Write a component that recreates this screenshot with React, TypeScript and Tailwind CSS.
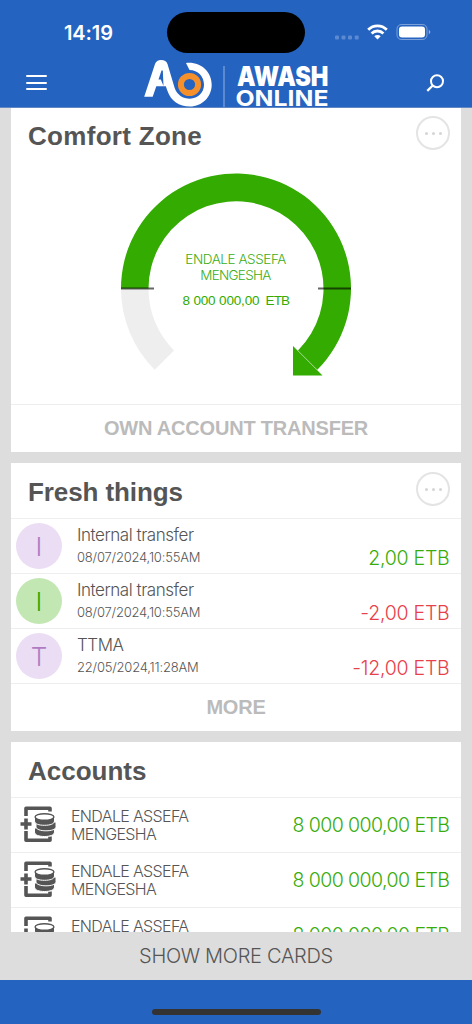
import { ReactNode } from "react";

const transfers = [
    { id: 1, letter: "I", title: "Internal transfer", date: "08/07/2024,10:55AM", amount: "2,00 ETB", avatar: "bg-[#ebddf3] text-[#af7cc4]", color: "text-[#37ac0b]" },
    { id: 2, letter: "I", title: "Internal transfer", date: "08/07/2024,10:55AM", amount: "-2,00 ETB", avatar: "bg-[#c3e7b3] text-[#33a800]", color: "text-[#e8404a]" },
    { id: 3, letter: "T", title: "TTMA", date: "22/05/2024,11:28AM", amount: "-12,00 ETB", avatar: "bg-[#ebddf3] text-[#af7cc4]", color: "text-[#e8404a]" },
];

const accounts = [1, 2, 3];

function StatusBar() {
    return (
        <div className="flex h-[60px] items-start justify-between pl-16 pr-[41px] pt-3">
            <span className="w-[50px] pt-[9px] font-[Inter] text-[20px] leading-6 font-semibold tracking-[-0.1px]">14:19</span>
            <div className="ml-[23px] h-[41px] w-[138px] rounded-full bg-black" />
            <div className="flex pt-[11px]">
                <svg width="97" height="20" viewBox="334 23 97 20">
                    <g fill="#fff" fillOpacity=".25">
                        <rect x="335" y="35.500" width="4" height="4" rx="1" />
                        <rect x="341.5" y="35.500" width="4" height="4" rx="1" />
                        <rect x="348" y="35.500" width="4" height="4" rx="1" />
                        <rect x="354.700" y="35.500" width="4" height="4" rx="1" />
                    </g>
                    <g fill="none" stroke="#fff" strokeWidth="2.800">
                        <path d="M368.200 29.700a13.200 13.200 0 0 1 18.600 0" />
                        <path d="M371.600 33.400a8.400 8.400 0 0 1 11.800 0" />
                    </g>
                    <path d="M377.500 39.500l-3.200-3.200a4.500 4.500 0 0 1 6.400 0z" fill="#fff" />
                    <rect x="397" y="24.500" width="30" height="15" rx="4.500" fill="none" stroke="#fff" strokeOpacity=".4" />
                    <rect x="399" y="26.500" width="26" height="11" rx="3" fill="#fff" />
                    <path d="M428.800 29.800q3 2.200 0 4.500z" fill="#fff" fillOpacity=".5" />
                </svg>
            </div>
        </div>
    );
}

function Logo() {
    return (
        <svg width="190" height="48" viewBox="142 59 190 48">
            <path d="M144.200 96.800L155 64Q156.500 60 161 60Q166.200 60 167.500 64L174.500 87.500C177 95 183 98.700 190 98.700C198 98.700 204 92.500 204 84.800C204 76.500 198 70 189.500 70L186 63C201 61.500 211.700 72 211.700 84.800C211.700 97 202 106.600 190 106.600C179 106.600 171 101 167.500 91L165.800 86.300H156.300L152.700 96.800zM158.500 79.500H160.800L163.500 86L162.800 70.500H161.500z" fill="#fff" fillRule="evenodd" />
            <circle cx="189.500" cy="84.500" r="8.600" fill="none" stroke="#f6902b" strokeWidth="6" />
            <path d="M224 66v41" stroke="#fff" strokeOpacity=".5" />
            <g fill="#fff" fontFamily="Inter, sans-serif">
                <text x="237" y="85.800" fontSize="26.500" fontWeight="900" textLength="91.500" lengthAdjust="spacingAndGlyphs">AWASH</text>
                <text x="235.500" y="105.500" fontSize="22" fontWeight="700" textLength="93" lengthAdjust="spacingAndGlyphs">ONLINE</text>
            </g>
        </svg>
    );
}

function Header() {
    return (
        <header className="h-[108px] shrink-0 border-b border-[#6288c4] bg-[#2563c0] text-white">
            <StatusBar />
            <div className="flex h-[47px] items-center justify-between pb-[2px] pl-[26px] pr-7">
                <button className="flex w-[21px] flex-col gap-[4.500px]">
                    <span className="h-[2px] rounded-full bg-white" />
                    <span className="h-[2px] rounded-full bg-white" />
                    <span className="h-[2px] rounded-full bg-white" />
                </button>
                <div className="ml-px">
                    <Logo />
                </div>
                <svg width="18" height="18" viewBox="0 0 18 18" fill="none" stroke="#fff" strokeWidth="2">
                    <circle cx="11" cy="7.200" r="6" />
                    <path d="M6.700 11.500L1.300 16.900" strokeWidth="2.200" />
                </svg>
            </div>
        </header>
    );
}

function Card({ title, children, menu = true, titleClass = "" }: { title: string; children: ReactNode; menu?: boolean; titleClass?: string }) {
    return (
        <section className="shrink-0 bg-white">
            <div className="flex h-[55px] items-center justify-between pl-[17px] pr-[11px]">
                <h2 className={`pt-[2px] text-[26px] leading-8 font-bold text-[#555] ${titleClass}`}>{title}</h2>
                {menu && (
                    <button className="mb-[3px] flex size-[34px] items-center justify-center gap-1 rounded-full border-2 border-[#e4e4e4]">
                        <span className="size-[3px] rounded-full bg-[#d5d5d5]" />
                        <span className="size-[3px] rounded-full bg-[#d5d5d5]" />
                        <span className="size-[3px] rounded-full bg-[#d5d5d5]" />
                    </button>
                )}
            </div>
            {children}
        </section>
    );
}

function Gauge() {
    return (
        <svg className="block" width="450" height="242" viewBox="11 162 450 242">
            <path d="M121 288.500A115 115 0 0 0 154.700 369.800L174 350.500A87.500 87.500 0 0 1 148.500 288.500z" fill="#eee" />
            <path d="M121 288.500A115 115 0 1 1 317.300 369.800L298 350.500A87.500 87.500 0 1 0 148.500 288.500z" fill="#33ab00" />
            <path d="M293 346V375.500H322.500z" fill="#33ab00" />
            <path d="M121 288.500h33M318 288.500h33" stroke="#000" strokeOpacity=".6" strokeWidth="2" />
            <g fill="#3bae14" fontFamily="Inter, sans-serif" fontWeight="300" fontSize="13.500" textAnchor="middle">
                <text x="235.800" y="264.300" textLength="101">ENDALE ASSEFA</text>
                <text x="235.800" y="279.500" textLength="71">MENGESHA</text>
            </g>
            <text x="182.500" y="305" fill="#33ab00" fontFamily="Liberation Sans, sans-serif" fontSize="13.500" textLength="77">8 000 000,00</text>
            <text x="265.500" y="305" fill="#33ab00" fontFamily="Liberation Sans, sans-serif" fontSize="13.500" textLength="24.500">ETB</text>
        </svg>
    );
}

function AccountIcon() {
    return (
        <svg className="mb-[2px]" width="38" height="38" viewBox="0 0 38 38" fill="none" stroke="#555" strokeWidth="3.600">
            <path d="M6 11V3.300H30V6.500M6 26V35.200H30V31.500" strokeLinejoin="round" />
            <path d="M0.500 19H11.500M6 13.500V24.500" />
            <g fill="#555" stroke="#fff" strokeWidth="1">
                <path d="M14.500 23v4c0 3 4.500 4.500 10 4.500s10-1.500 10-4.500v-4z" />
                <path d="M16 17v4.500c0 3 4.500 4.300 10 4.300s10-1.300 10-4.300V17z" />
                <path d="M14.500 12v4c0 3 4.500 4.300 10 4.300s10-1.300 10-4.300v-4z" />
            </g>
            <ellipse cx="24.500" cy="12" rx="9.400" ry="3.300" fill="#fff" strokeWidth="1.400" />
        </svg>
    );
}

export default function App() {
    return (
        <div className="flex h-screen w-full flex-col overflow-hidden bg-[#ddd] font-['Liberation_Sans',sans-serif]">
            <Header />
            <main className="flex min-h-0 flex-1 flex-col gap-[11px] overflow-hidden px-[11px]">
                <div className="-mt-px">
                    <Card title="Comfort Zone" titleClass="tracking-[0.3px]">
                        <Gauge />
                        <button className="block h-12 w-full border-t border-[#eee] pb-[2px] text-[20px] font-bold tracking-[-0.2px] text-[#bbb]">OWN ACCOUNT TRANSFER</button>
                    </Card>
                </div>
                <Card title="Fresh things" titleClass="tracking-[-0.1px]">
                    {transfers.map((t) => (
                        <div key={t.id} className="flex h-[55px] border-t border-[#eee] pl-[5px] pr-[11.500px] font-[Inter] font-light text-[#555]">
                            <div className={`mt-1 flex size-[46px] items-center justify-center rounded-full text-[26px] ${t.avatar}`}>{t.letter}</div>
                            <div className="ml-[15px] flex-1 pt-1">
                                <p className="text-[17px] leading-6 tracking-[-0.45px]">{t.title}</p>
                                <p className="text-[13px] leading-5 tracking-[-0.2px]">{t.date}</p>
                            </div>
                            <p className={`pt-[25px] text-[19.500px] leading-7 tracking-[-0.25px] ${t.color}`}>{t.amount}</p>
                        </div>
                    ))}
                    <button className="block h-12 w-full border-t border-[#eee] pb-[2px] text-[20px] font-bold tracking-[-0.2px] text-[#bbb]">MORE</button>
                </Card>
                <Card title="Accounts" menu={false}>
                    {accounts.map((id) => (
                        <div key={id} className="flex h-[55px] items-center border-t border-[#eee] pl-[9px] pr-[11.500px] font-[Inter] font-light">
                            <AccountIcon />
                            <p className="ml-[13px] w-[140px] text-[16px] leading-[18px] tracking-[-0.65px] text-[#555]">ENDALE ASSEFA MENGESHA</p>
                            <p className="flex-1 pt-[2px] text-right text-[19.500px] tracking-[-0.55px] text-[#37ac0b]">8 000 000,00 ETB</p>
                        </div>
                    ))}
                </Card>
            </main>
            <button className="h-12 shrink-0 font-[Inter] text-[20px] font-light tracking-[-0.3px] text-[#555]">SHOW MORE CARDS</button>
            <footer className="flex h-11 shrink-0 items-end justify-center bg-[#2563c0] pb-[9px]">
                <div className="h-[6px] w-[169px] rounded-full bg-[#333]" />
            </footer>
        </div>
    );
}
